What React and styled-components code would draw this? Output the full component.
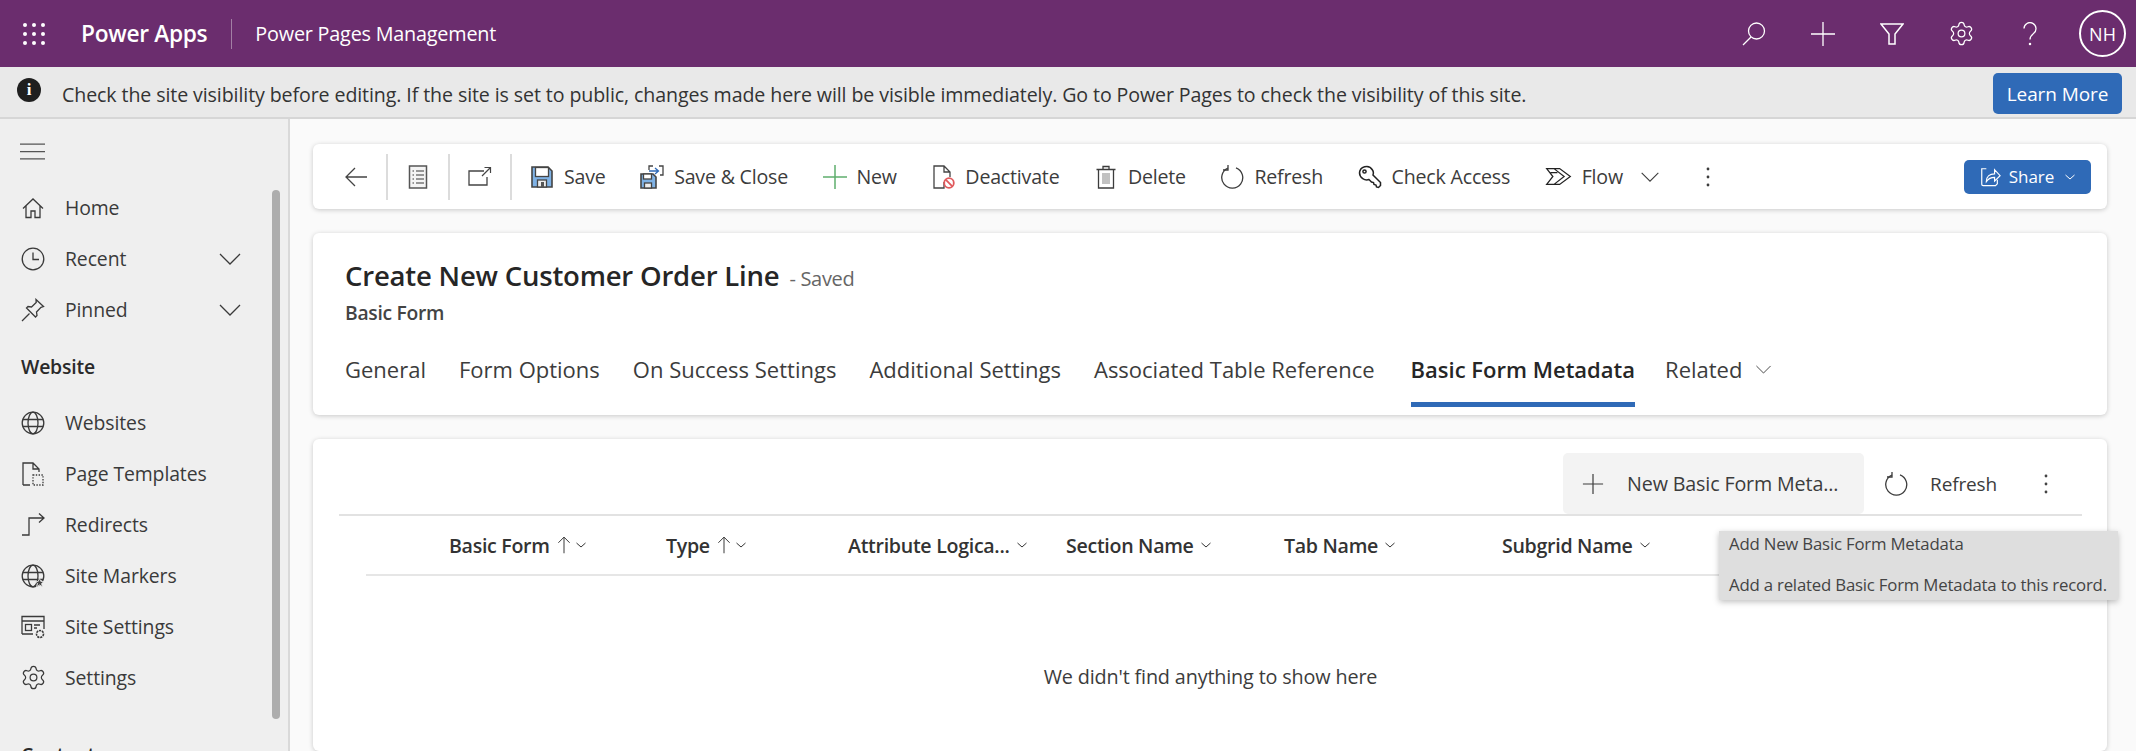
import styled, { createGlobalStyle } from "styled-components";
import { Settings as GearIcon } from "lucide-react";

const GlobalStyle = createGlobalStyle`
  html, body {
    margin: 0;
    padding: 0;
    height: 751px;
    overflow: hidden;
    background: #fafafa;
    font-family: "Open Sans", "Noto Sans", sans-serif;
    color: #333;
  }
  * { box-sizing: border-box; }
`;

const Icon = ({ size = 24, children, ...rest }) => (
  <svg
    width={size}
    height={size}
    viewBox="0 0 24 24"
    fill="none"
    stroke="currentColor"
    strokeWidth="1.3"
    style={{ flexShrink: 0, display: "block" }}
    {...rest}
  >
    {children}
  </svg>
);

const Gear = styled(GearIcon).attrs({ size: 27, strokeWidth: 1.1 })`
  margin: -1.5px;
  flex-shrink: 0;
`;

const Chevron = ({ size = 24 }) => (
  <Icon size={size}>
    <path d="M2 7l10 10L22 7" />
  </Icon>
);

const SmallChevron = () => (
  <Icon size={12} strokeWidth="2">
    <path d="M3 8l9 8 9-8" />
  </Icon>
);

const Kebab = () => (
  <Icon size={24} stroke="none" fill="currentColor">
    <circle cx="12" cy="4" r="1.4" />
    <circle cx="12" cy="12" r="1.4" />
    <circle cx="12" cy="20" r="1.4" />
  </Icon>
);

const Globe = ({ star }) => (
  <Icon>
    <circle cx="12" cy="12" r="10.8" />
    <ellipse cx="12" cy="12" rx="5" ry="10.8" />
    <path d="M1.8 8.5h20.4M1.8 15.5h20.4" />
    {star && <path d="M18.5 14.5l1.4 3h3.1l-2.5 2 1 3.3-3-1.9-3 1.9 1-3.3-2.5-2h3.1z" fill="#444" stroke="#efefef" strokeWidth="0.8" />}
  </Icon>
);

const homeIcon = (
  <Icon>
    <path d="M2 12.5L12 3l10 9.5M5 10v11.5h5V15h4v6.5h5V10" />
  </Icon>
);
const clockIcon = (
  <Icon>
    <circle cx="12" cy="12" r="10.8" />
    <path d="M12 5.5v7h6" />
  </Icon>
);
const pinIcon = (
  <Icon>
    <path d="M15 1.5l7.5 7-2.5.8-4.5 4.7.5 3.5-1.5 1.5-9-9 1.5-1.5 3.5.5 4.7-4.5zM8.5 15.5L1 23" />
  </Icon>
);
const pageIcon = (
  <Icon>
    <path d="M2 23V1h10l6 6v3M12 1v6h6M2 23h7" />
    <rect x="12" y="13" width="10" height="10" strokeDasharray="1.4 1.4" />
  </Icon>
);
const redirectIcon = (
  <Icon>
    <path d="M1 22h7V5h15M18 0.5L23 5l-5 4.5" />
  </Icon>
);
const siteSettingsIcon = (
  <Icon>
    <path d="M1 19V1.5h22V14M1 6h22M1 19h11" />
    <rect x="4.5" y="9.5" width="6" height="6" />
    <path d="M13 10h6M13 13h3" />
    <circle cx="19" cy="19" r="3.5" strokeWidth="1.6" strokeDasharray="2.2 0.8" />
  </Icon>
);

const saveIcon = (
  <Icon>
    <path d="M2 2h16l4 4v16H2z" fill="#7fb2e5" stroke="#444" strokeWidth="1.6" />
    <rect x="5.5" y="2.5" width="13" height="9" fill="#fff" stroke="#444" />
    <rect x="7.5" y="15" width="9" height="7" fill="#eee" stroke="#444" />
    <rect x="11" y="17" width="3" height="5" fill="#555" stroke="none" />
  </Icon>
);
const saveCloseIcon = (
  <Icon>
    <path d="M1 9h12l3 3v11H1z" fill="#7fb2e5" stroke="#444" strokeWidth="1.6" />
    <rect x="3.5" y="9" width="8" height="5" fill="#fff" stroke="#444" />
    <rect x="4.5" y="18" width="7" height="5" fill="#eee" stroke="#444" />
    <path d="M9 6h9M15 3l3.5 3-3.5 3" stroke="#2f6ab7" />
    <path d="M19 1h4v9h-3M9 5V1h4" stroke="#444" />
  </Icon>
);
const docListIcon = (
  <Icon>
    <rect x="3.5" y="1" width="17" height="22" fill="#f4f4f4" stroke="#555" strokeWidth="1.5" />
    <path d="M6.5 6h1.5M10 6h8M6.5 10h1.5M10 10h8M6.5 14h1.5M10 14h8M6.5 18h1.5M10 18h8" stroke="#777" />
  </Icon>
);
const popoutIcon = (
  <Icon>
    <path d="M16 6H1v14h18v-8" />
    <path d="M14 11l8-8M16.5 2.5H22.5V8" strokeWidth="1.2" />
  </Icon>
);
const deactivateIcon = (
  <Icon>
    <path d="M13 17V23H3V1h10l6 6v5M13 1v6h6" stroke="#444" />
    <circle cx="18" cy="18" r="4.8" stroke="#e0595c" strokeWidth="1.8" fill="#fff" />
    <path d="M14.7 14.7l6.6 6.6" stroke="#e0595c" strokeWidth="1.8" />
  </Icon>
);
const trashIcon = (
  <Icon>
    <path d="M2.5 4.5h19M9 4.5V1.5h6v3M4.5 4.5V23h15V4.5" />
    <path d="M9 8v11M11 8v11M13 8v11M15 8v11" strokeWidth="0.9" stroke="#777" />
  </Icon>
);
const refreshIcon = (
  <Icon>
    <path d="M16 2.8A10.5 10.5 0 1 1 8 3" />
    <path d="M8 0V5H3" />
  </Icon>
);
const keyIcon = (
  <Icon stroke="#222" strokeWidth="1.5">
    <path d="M1.5 8.5a7 7 0 0 1 13-3.5c1 1.5 1 3.5.5 5l7.5 7.5v3l-2 2-2-.5-.5-2-2-.5-.5-2-2-.5-2.5-2.5c-4 1.5-9.5-1.5-9.5-7z" />
    <circle cx="6.5" cy="6.5" r="1.6" />
  </Icon>
);
const flowIcon = (
  <Icon size={27} strokeWidth="1.1" stroke="#222">
    <path d="M1.5 5H13l9.5 7-9.5 7H1.5l5.5-7zM8 5l9 7-9 7M5 8.5h6" />
  </Icon>
);
const shareIcon = (
  <Icon size={22}>
    <path d="M8 3H3v17a1.5 1.5 0 0 0 1.5 1.5H18l2-2V15" />
    <path d="M8 17c0-6 4-8.500 9-8.500V4l6 6.500-6 6V12.500c-4 0-6.500 1-9 4.500z" />
  </Icon>
);

const Shell = styled.div`
  width: 2136px;
  height: 751px;
  display: flex;
  flex-direction: column;
  overflow: hidden;
`;

const TopBar = styled.header`
  height: 67px;
  flex-shrink: 0;
  background: #6b2d6e;
  color: #fff;
  display: flex;
  align-items: center;
  padding: 0 10px 0 23px;
`;

const Waffle = styled.div`
  display: grid;
  grid-template-columns: repeat(3, 4px);
  gap: 5px;
  margin-right: 36px;
  span {
    width: 4px;
    height: 4px;
    border-radius: 50%;
    background: #fff;
  }
`;

const AppName = styled.div`
  font-size: 22.7px;
  font-weight: 600;
  letter-spacing: -0.3px;
  padding-right: 24px;
  border-right: 1px solid #a27fa4;
  line-height: 30px;
`;

const AreaName = styled.div`
  font-size: 19.8px;
  margin-left: 23px;
  letter-spacing: -0.2px;
`;

const TopActions = styled.div`
  margin-left: auto;
  display: flex;
  align-items: center;
  gap: 45px;
`;

const Avatar = styled.div`
  width: 47px;
  height: 47px;
  border-radius: 50%;
  border: 2px solid #fff;
  display: flex;
  align-items: center;
  justify-content: center;
  font-size: 18px;
  margin-left: -8px;
`;

const Notice = styled.div`
  height: 52px;
  flex-shrink: 0;
  background: #e9e9e9;
  border-bottom: 2px solid #d6d6d6;
  display: flex;
  align-items: center;
  padding: 0 14px 0 17px;
`;

const InfoDot = styled.div`
  width: 24px;
  height: 24px;
  border-radius: 50%;
  background: #1f1f1f;
  color: #fff;
  font-size: 17px;
  font-weight: 700;
  font-family: "Liberation Serif", serif;
  display: flex;
  align-items: center;
  justify-content: center;
  margin: -4px 21px 0 0;
`;

const NoticeText = styled.div`
  font-size: 19.6px;
  letter-spacing: -0.1px;
  padding-top: 5px;
  color: #333;
  white-space: nowrap;
`;

const BlueButton = styled.button`
  border: none;
  background: #2f6ab7;
  color: #fff;
  font-family: inherit;
  border-radius: 5px;
  display: flex;
  align-items: center;
  justify-content: center;
`;

const LearnMore = styled(BlueButton)`
  margin-left: auto;
  width: 129px;
  height: 41px;
  font-size: 19px;
  margin-top: 3px;
  letter-spacing: -0.1px;
`;

const Body = styled.div`
  flex: 1;
  min-height: 0;
  display: flex;
`;

const Sidebar = styled.nav`
  width: 290px;
  flex-shrink: 0;
  background: #efefef;
  border-right: 2px solid #d9d9d9;
  position: relative;
  overflow: hidden;
  color: #333;
`;

const Burger = styled.div`
  height: 63px;
  display: flex;
  align-items: center;
  padding: 2px 0 0 20px;
  color: #555;
`;

const NavRow = styled.div`
  height: 51px;
  display: flex;
  align-items: center;
  padding-right: 46px;
  padding-left: 21px;
  font-size: 19.4px;
  letter-spacing: -0.1px;
  color: #3a3a3a;
  span {
    margin-left: 20px;
    flex: 1;
  }
`;

const NavHeading = styled.div`
  height: 62px;
  display: flex;
  align-items: center;
  padding-left: 21px;
  font-size: 19.4px;
  font-weight: 600;
  color: #2a2a2a;
  letter-spacing: -0.2px;
  margin-top: ${(p) => p.$top || 0}px;
`;

const ScrollThumb = styled.div`
  position: absolute;
  left: 272px;
  top: 71px;
  width: 8px;
  height: 529px;
  border-radius: 4px;
  background: #adadad;
`;

const Main = styled.main`
  flex: 1;
  min-width: 0;
  background: #fafafa;
  padding: 25px 29px 0 23px;
  display: flex;
  flex-direction: column;
  gap: 24px;
`;

const Card = styled.section`
  background: #fff;
  border-radius: 6px;
  box-shadow: 0 1px 5px rgba(0, 0, 0, 0.2);
  position: relative;
  flex-shrink: 0;
`;

const CommandBar = styled(Card)`
  height: 65px;
  display: flex;
  align-items: center;
  padding: 0 16px 0 31px;
  color: #444;
`;

const IconCell = styled.div`
  display: flex;
  align-items: center;
  padding: 0 18px;
  &:first-child {
    padding-left: 0;
  }
`;

const Sep = styled.div`
  width: 2px;
  height: 46px;
  background: #dcdcdc;
`;

const Commands = styled.div`
  display: flex;
  align-items: center;
  gap: 34.5px;
  margin-left: 18px;
`;

const Command = styled.div`
  display: flex;
  align-items: center;
  gap: 10px;
  font-size: 19.6px;
  letter-spacing: -0.2px;
  color: #3c3c3c;
  white-space: nowrap;
`;

const FlowChevron = styled.span`
  display: flex;
  margin-left: 7px;
  margin-right: 2px;
`;

const ShareButton = styled(BlueButton)`
  margin-left: auto;
  width: 127px;
  height: 34px;
  gap: 8px;
  font-size: 17px;
  svg:last-child {
    margin-left: 2px;
  }
`;

const FormCard = styled(Card)`
  height: 182px;
  padding: 25px 32px 0;
`;

const TitleRow = styled.div`
  display: flex;
  align-items: baseline;
  height: 36px;
  line-height: 36px;
`;

const Title = styled.h1`
  margin: 0;
  font-size: 27.5px;
  line-height: 36px;
  font-weight: 600;
  letter-spacing: -0.2px;
  color: #262626;
`;

const Status = styled.span`
  margin-left: 10px;
  font-size: 20px;
  letter-spacing: -0.3px;
  color: #666;
`;

const Entity = styled.div`
  margin-top: 7px;
  line-height: 24px;
  font-size: 19.3px;
  font-weight: 600;
  letter-spacing: -0.3px;
  color: #444;
`;

const Tabs = styled.div`
  display: flex;
  margin-top: 15px;
  gap: 33px;
`;

const Tab = styled.div`
  display: flex;
  align-items: center;
  gap: 13px;
  height: 67px;
  padding-bottom: 4px;
  font-size: 22px;
  font-weight: ${(p) => (p.$active ? 600 : 400)};
  color: ${(p) => (p.$active ? "#262626" : "#3c3c3c")};
  border-bottom: 5px solid ${(p) => (p.$active ? "#2f6ab7" : "transparent")};
  margin: 0 ${(p) => (p.$active ? "-3px" : "0")} 0 ${(p) => (p.$active ? "3px" : "0")};
  white-space: nowrap;
`;

const GridCard = styled(Card)`
  flex: 1;
  padding: 14px 25px 0 26px;
`;

const GridBar = styled.div`
  height: 61px;
  display: flex;
  align-items: center;
  justify-content: flex-end;
  padding-right: 24px;
  border-bottom: 0;
  color: #444;
`;

const AddButton = styled.div`
  width: 301px;
  height: 61px;
  background: #f3f3f3;
  border-radius: 5px;
  display: flex;
  align-items: center;
  gap: 23px;
  padding-left: 19px;
  font-size: 19.7px;
  letter-spacing: -0.15px;
  color: #3c3c3c;
  white-space: nowrap;
`;

const GridRefresh = styled.div`
  display: flex;
  align-items: center;
  gap: 22px;
  margin-left: 20px;
  margin-right: 37px;
  font-size: 19px;
  letter-spacing: -0.15px;
  color: #3c3c3c;
`;

const ColumnHead = styled.div`
  border-top: 2px solid #e2e2e2;
  margin: 0;
`;

const ColumnRow = styled.div`
  margin-left: 27px;
  height: 60px;
  border-bottom: 2px solid #e6e6e6;
  display: grid;
  grid-template-columns: 217px 182px repeat(4, 218px);
  padding-left: 83px;
  align-items: center;
`;

const Column = styled.div`
  display: flex;
  align-items: center;
  gap: 6px;
  font-size: 19.6px;
  font-weight: 600;
  letter-spacing: -0.3px;
  color: #333;
  white-space: nowrap;
`;

const SortArrow = styled.span`
  display: flex;
  margin: 0 -4px 0 -1px;
`;

const Empty = styled.div`
  padding-top: 88px;
  line-height: 26px;
  text-align: center;
  font-size: 19.8px;
  letter-spacing: -0.15px;
  color: #3c3c3c;
`;

const Tooltip = styled.div`
  position: absolute;
  top: 92px;
  right: -11px;
  width: 399px;
  height: 69px;
  background: #dedede;
  box-shadow: 0 2px 6px rgba(0, 0, 0, 0.25);
  padding: 2px 10px 4px;
  font-size: 16.8px;
  letter-spacing: -0.2px;
  color: #444;
  display: flex;
  flex-direction: column;
  justify-content: space-between;
  white-space: nowrap;
  line-height: 22px;
`;

const topNav = [
  { label: "Home", icon: homeIcon },
  { label: "Recent", icon: clockIcon, more: true },
  { label: "Pinned", icon: pinIcon, more: true },
];

const siteNav = [
  { label: "Websites", icon: <Globe /> },
  { label: "Page Templates", icon: pageIcon },
  { label: "Redirects", icon: redirectIcon },
  { label: "Site Markers", icon: <Globe star /> },
  { label: "Site Settings", icon: siteSettingsIcon },
  { label: "Settings", icon: <Gear /> },
];

const commands = [
  { label: "Save", icon: saveIcon },
  { label: "Save & Close", icon: saveCloseIcon },
  { label: "New", icon: <Icon stroke="#5fae6d" strokeWidth="1.5"><path d="M12 0v24M0 12h24" /></Icon> },
  { label: "Deactivate", icon: deactivateIcon },
  { label: "Delete", icon: trashIcon },
  { label: "Refresh", icon: refreshIcon },
  { label: "Check Access", icon: keyIcon },
];

const tabs = [
  "General",
  "Form Options",
  "On Success Settings",
  "Additional Settings",
  "Associated Table Reference",
];

const columns = [
  { label: "Basic Form", sorted: true },
  { label: "Type", sorted: true },
  { label: "Attribute Logica..." },
  { label: "Section Name" },
  { label: "Tab Name" },
  { label: "Subgrid Name" },
];

export default function App() {
  return (
    <Shell>
      <GlobalStyle />
      <TopBar>
        <Waffle>
          {Array.from({ length: 9 }).map((_, i) => (
            <span key={i} />
          ))}
        </Waffle>
        <AppName>Power Apps</AppName>
        <AreaName>Power Pages Management</AreaName>
        <TopActions>
          <Icon>
            <circle cx="14.500" cy="9" r="8" />
            <path d="M9 15L1 23" />
          </Icon>
          <Icon>
            <path d="M12 0v24M0 12h24" />
          </Icon>
          <Icon>
            <path d="M1 2h22l-8 10v10H9V12z" strokeWidth="1.5" />
          </Icon>
          <Gear />
          <Icon>
            <path d="M6 6.500a6 6 0 1 1 9.500 5c-2 1.500-3.500 2.500-3.500 6" />
            <circle cx="12" cy="22" r="0.6" />
          </Icon>
          <Avatar>NH</Avatar>
        </TopActions>
      </TopBar>

      <Notice>
        <InfoDot>i</InfoDot>
        <NoticeText>
          Check the site visibility before editing. If the site is set to public, changes made here will be visible immediately. Go to Power Pages to check the visibility of this site.
        </NoticeText>
        <LearnMore>Learn More</LearnMore>
      </Notice>

      <Body>
        <Sidebar>
          <Burger>
            <Icon size={25} strokeWidth="1.2">
              <path d="M0 5h24M0 12h24M0 19h24" />
            </Icon>
          </Burger>
          {topNav.map((item) => (
            <NavRow key={item.label}>
              {item.icon}
              <span>{item.label}</span>
              {item.more && <Chevron />}
            </NavRow>
          ))}
          <NavHeading>Website</NavHeading>
          {siteNav.map((item) => (
            <NavRow key={item.label}>
              {item.icon}
              <span>{item.label}</span>
            </NavRow>
          ))}
          <NavHeading $top={20}>Content</NavHeading>
          <ScrollThumb />
        </Sidebar>

        <Main>
          <CommandBar>
            <IconCell>
              <Icon>
                <path d="M23 12H2M11 3l-9 9 9 9" />
              </Icon>
            </IconCell>
            <Sep />
            <IconCell>{docListIcon}</IconCell>
            <Sep />
            <IconCell>{popoutIcon}</IconCell>
            <Sep />
            <Commands>
              {commands.map((c) => (
                <Command key={c.label}>
                  {c.icon}
                  {c.label}
                </Command>
              ))}
              <Command>
                {flowIcon}
                Flow
                <FlowChevron>
                  <Chevron size={20} />
                </FlowChevron>
              </Command>
              <Command>
                <Kebab />
              </Command>
            </Commands>
            <ShareButton>
              {shareIcon}
              Share
              <SmallChevron />
            </ShareButton>
          </CommandBar>

          <FormCard>
            <TitleRow>
              <Title>Create New Customer Order Line</Title>
              <Status>- Saved</Status>
            </TitleRow>
            <Entity>Basic Form</Entity>
            <Tabs>
              {tabs.map((t) => (
                <Tab key={t}>{t}</Tab>
              ))}
              <Tab $active>Basic Form Metadata</Tab>
              <Tab>
                Related
                <Chevron size={17} />
              </Tab>
            </Tabs>
          </FormCard>

          <GridCard>
            <GridBar>
              <AddButton>
                <Icon size={22}>
                  <path d="M12 1v22M1 12h22" />
                </Icon>
                New Basic Form Meta...
              </AddButton>
              <GridRefresh>
                {refreshIcon}
                Refresh
              </GridRefresh>
              <Kebab />
            </GridBar>
            <ColumnHead>
              <ColumnRow>
                {columns.map((c) => (
                  <Column key={c.label}>
                    {c.label}
                    {c.sorted && (
                      <SortArrow>
                        <Icon size={18}>
                          <path d="M12 23V1.500M4.500 9L12 1.500l7.500 7.500" />
                        </Icon>
                      </SortArrow>
                    )}
                    <SmallChevron />
                  </Column>
                ))}
              </ColumnRow>
            </ColumnHead>
            <Empty>We didn't find anything to show here</Empty>
            <Tooltip>
              <div>Add New Basic Form Metadata</div>
              <div>Add a related Basic Form Metadata to this record.</div>
            </Tooltip>
          </GridCard>
        </Main>
      </Body>
    </Shell>
  );
}
